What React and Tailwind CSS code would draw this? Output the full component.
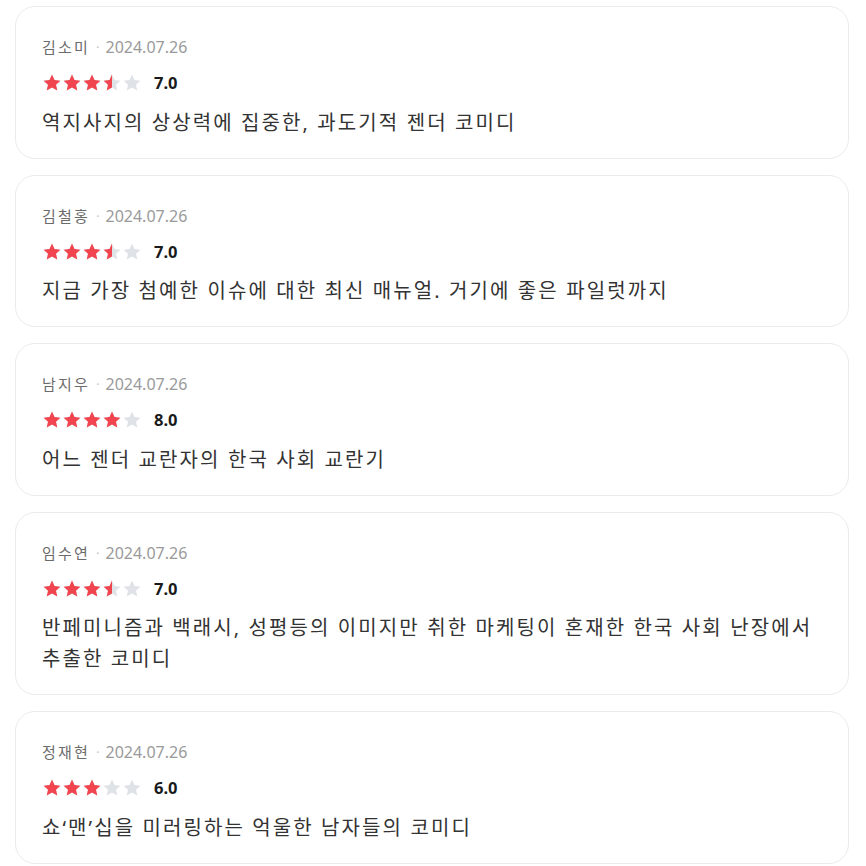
import React from 'react'

const reviews = [
  { name: '김소미', date: '2024.07.26', score: 7.0, text: '역지사지의 상상력에 집중한, 과도기적 젠더 코미디' },
  { name: '김철홍', date: '2024.07.26', score: 7.0, text: '지금 가장 첨예한 이슈에 대한 최신 매뉴얼. 거기에 좋은 파일럿까지' },
  { name: '남지우', date: '2024.07.26', score: 8.0, text: '어느 젠더 교란자의 한국 사회 교란기' },
  { name: '임수연', date: '2024.07.26', score: 7.0, text: '반페미니즘과 백래시, 성평등의 이미지만 취한 마케팅이 혼재한 한국 사회 난장에서 추출한 코미디' },
  { name: '정재현', date: '2024.07.26', score: 6.0, text: '쇼‘맨’십을 미러링하는 억울한 남자들의 코미디' },
];

const STAR = 'M10 1.6l2.5 5.5 5.9.6-4.4 4 1.3 5.9L10 14.6l-5.3 3 1.3-5.9-4.4-4 5.9-.6z';

// fill: 0, 0.5 or 1
const Star = ({ fill, id }) => (
  <svg width="20" height="20" viewBox="0 0 20 20">
    <defs>
      <clipPath id={id}>
        <rect x="0" y="0" width={20 * fill} height="20" />
      </clipPath>
    </defs>
    <path d={STAR} fill="#dfe2e6" />
    {fill > 0 && <path d={STAR} fill="#f0444f" clipPath={`url(#${id})`} />}
  </svg>
);

const Stars = ({ score, k }) => {
  const v = score / 2;
  return (
    <div className="flex">
      {[0, 1, 2, 3, 4].map(i => {
        const f = Math.max(0, Math.min(1, v - i));
        return <Star key={i} fill={f >= 1 ? 1 : f >= 0.5 ? 0.5 : 0} id={`s${k}-${i}`} />;
      })}
    </div>
  );
};

const ReviewCard = ({ r, k }) => (
  <div className="rounded-[20px] border border-[#ebebeb] bg-white pl-[26px] pr-[26px] pt-[29px] pb-[20px]">
    <div className="flex items-center h-[22px] leading-[22px]">
      <span className="text-[#6b6b6b] text-[15px] tracking-[2.2px]">{r.name}</span>
      <span className="text-[#c8c8c8] mx-[6px] text-[13px]">·</span>
      <span className="text-[#9a9a9a] text-[16px]">{r.date}</span>
    </div>
    <div className="flex items-center mt-[15px] h-[20px]">
      <Stars score={r.score} k={k} />
      <span className="ml-[12px] text-[16.5px] font-bold text-[#1a1a1a] leading-[20px]">{r.score.toFixed(1)}</span>
    </div>
    <p className="mt-[13.5px] text-[20px] leading-[31px] tracking-[2.1px] break-keep text-[#333333]">{r.text}</p>
  </div>
);

export default function App() {
  return (
    <div className="bg-white min-h-screen pt-[6px] pl-[15px]" style={{ fontFamily: '"Noto Sans", "Noto Sans CJK KR", sans-serif' }}>
      <div className="w-[834px] flex flex-col gap-[16px]">
        {reviews.map((r, i) => <ReviewCard key={i} r={r} k={i} />)}
      </div>
    </div>
  );
}
